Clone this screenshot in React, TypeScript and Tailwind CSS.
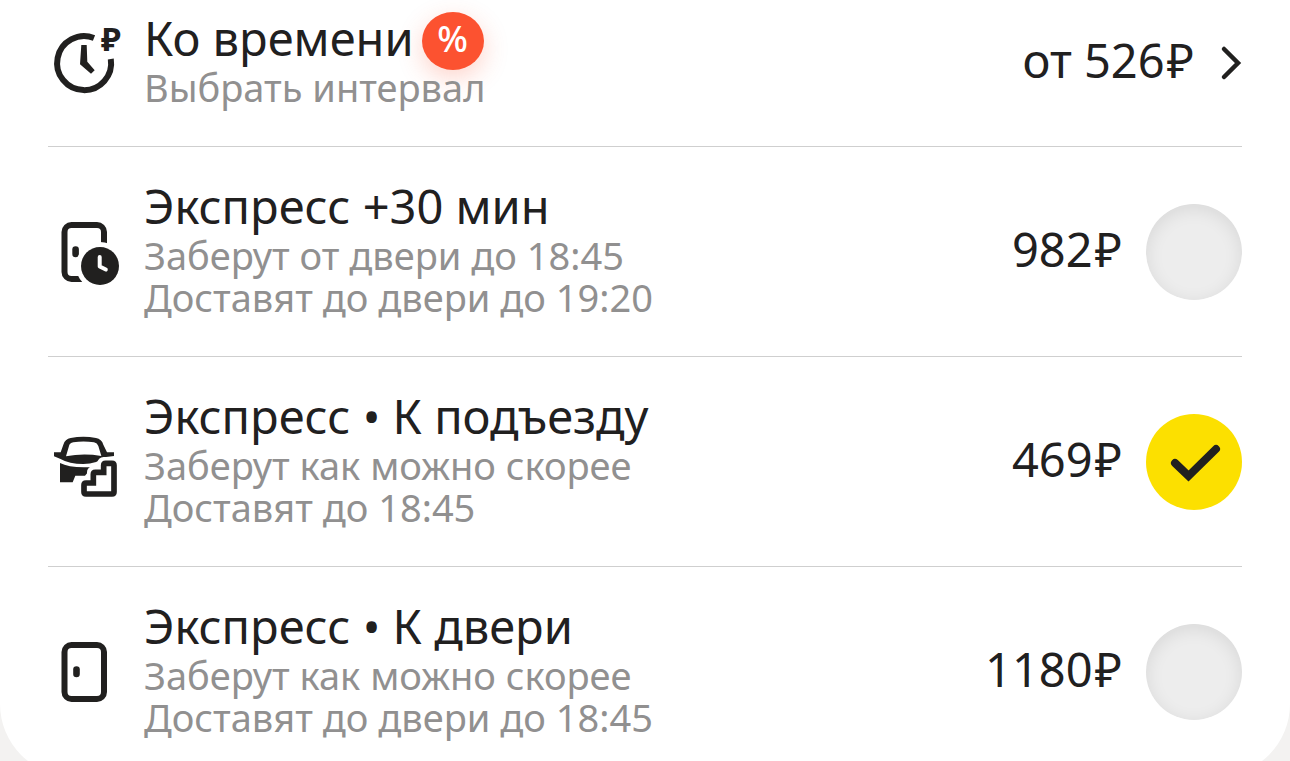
import React, { useState } from "react";

const ClockRubleIcon = () => (
  <svg viewBox="0 0 72 72" className="size-18 shrink-0 overflow-visible" aria-hidden="true">
    <path d="M46 11A27 27 0 1 0 62.8 32" fill="none" stroke="currentColor" strokeWidth="6" />
    <path d="M33.3 18H38.7L39.3 34.7L46.7 43.3L43 46.7L32 37.3Z" fill="currentColor" />
    <text x="53" y="24" fontSize="33" fontWeight="700" fill="currentColor">
      ₽
    </text>
  </svg>
);

const DoorIcon = () => (
  <svg viewBox="0 0 72 72" className="size-18 shrink-0" aria-hidden="true">
    <rect x="16.5" y="9" width="39.5" height="54" rx="7" fill="none" stroke="currentColor" strokeWidth="6" />
    <rect x="25.2" y="30.3" width="6.6" height="11" rx="3.3" fill="currentColor" />
  </svg>
);

const DoorClockIcon = () => (
  <svg viewBox="0 0 72 72" className="size-18 shrink-0" aria-hidden="true">
    <rect x="16.5" y="9" width="39.5" height="54" rx="7" fill="none" stroke="currentColor" strokeWidth="6" />
    <rect x="24.3" y="30.3" width="6.6" height="11" rx="3.3" fill="currentColor" />
    <circle cx="52" cy="50" r="24" fill="#fff" />
    <circle cx="52" cy="50" r="19" fill="currentColor" />
    <path
      d="M51.7 41V50.5L57.8 53.5"
      fill="none"
      stroke="#fff"
      strokeWidth="4"
      strokeLinecap="round"
      strokeLinejoin="round"
    />
  </svg>
);

const CarStairsIcon = () => (
  <svg viewBox="24 18 216 216" className="size-18 shrink-0" aria-hidden="true">
    <path
      fillRule="evenodd"
      d="M42 97H62L70 74Q75 57 92 54Q130 46 168 54Q185 57 190 74L201 97H222V108L192 112Q172 132 130 132Q88 132 60 116L42 109ZM78 109Q130 99 184 108L175 78Q172 69 162 67Q130 62 100 67Q89 69 87 78Z"
      fill="currentColor"
    />
    <path d="M60 129Q90 145 157 141L135 167H106L98 187H60Z" fill="currentColor" />
    <path
      d="M132 222H222V130H191V157H160V189H132Z"
      fill="#fff"
      stroke="#fff"
      strokeWidth="38"
      strokeLinejoin="round"
    />
    <path
      d="M138 222H216Q222 222 222 216V136Q222 130 216 130H197Q191 130 191 136V157H166Q160 157 160 163V189H138Q132 189 132 195V216Q132 222 138 222Z"
      fill="#fff"
      stroke="currentColor"
      strokeWidth="17"
    />
  </svg>
);

const options = [
  {
    id: "plus30",
    Icon: DoorClockIcon,
    title: "Экспресс +30 мин",
    lines: ["Заберут от двери до 18:45", "Доставят до двери до 19:20"],
    price: "982",
  },
  {
    id: "entrance",
    Icon: CarStairsIcon,
    title: "Экспресс • К подъезду",
    lines: ["Заберут как можно скорее", "Доставят до 18:45"],
    price: "469",
  },
  {
    id: "door",
    Icon: DoorIcon,
    title: "Экспресс • К двери",
    lines: ["Заберут как можно скорее", "Доставят до двери до 18:45"],
    price: "1180",
  },
];

const Price = ({ children }: any) => (
  <span className="flex gap-0.5 pb-1.5 text-[47px] leading-[60px]">
    <span>{children}</span>
    <span>₽</span>
  </span>
);

const Option = ({ option, checked, onSelect }: any) => {
  const { id, Icon, title, lines, price } = option;

  return (
    <label
      htmlFor={id}
      className="flex items-center gap-6 border-b border-[#cfcfcf] last:border-b-0 cursor-pointer"
    >
      <Icon />
      <span className="flex-1 pt-[31px] pb-[38px]">
        <span className="block text-[47px] leading-[56px]">{title}</span>
        {lines.map((line: string) => (
          <span key={line} className="block text-[38px] leading-[42px] text-[#919090]">
            {line}
          </span>
        ))}
      </span>
      <Price>{price}</Price>
      <span className="relative size-24 shrink-0">
        <input
          id={id}
          type="radio"
          name="tariff"
          checked={checked}
          onChange={() => onSelect(id)}
          className="block size-24 appearance-none rounded-full bg-[#ededed] shadow-[inset_0_4px_18px_rgba(0,0,0,0.09)] checked:bg-[#fce000] checked:shadow-none"
        />
        {checked && (
          <svg viewBox="0 0 96 96" className="absolute inset-0 pointer-events-none" aria-hidden="true">
            <path d="M29 49L42.5 62L70 35" fill="none" stroke="currentColor" strokeWidth="8" strokeLinecap="round" />
          </svg>
        )}
      </span>
    </label>
  );
};

const App = () => {
  const [selected, setSelected] = useState("entrance");

  return (
    <div className="h-screen overflow-hidden bg-[#f3f2f1] font-['Noto_Sans',sans-serif] text-[#21201f]">
      <main className="-mt-[21px] rounded-b-[72px] bg-white px-12">
        <button
          type="button"
          className="flex w-full items-center gap-6 border-b border-[#cfcfcf] text-left cursor-pointer"
        >
          <ClockRubleIcon />
          <span className="flex-1 pt-[31px] pb-[38px]">
            <span className="relative block w-fit text-[47px] leading-[56px]">
              Ко времени
              <span className="absolute left-full top-0.5 ml-2 flex h-[58px] w-[62px] items-center justify-center rounded-[50%] bg-[#fc5230] pb-1 text-[36px] font-medium text-white shadow-[0_8px_24px_rgba(252,82,48,0.25)]">
                %
              </span>
            </span>
            <span className="relative block text-[38px] leading-[42px] text-[#919090]">Выбрать интервал</span>
          </span>
          <Price>от 526</Price>
          <svg viewBox="0 0 24 36" className="h-9 w-6 shrink-0" aria-hidden="true">
            <path d="M6 4L20 18L6 32" fill="none" stroke="currentColor" strokeWidth="4.5" strokeLinecap="round" />
          </svg>
        </button>
        {options.map((option) => (
          <Option
            key={option.id}
            option={option}
            checked={selected === option.id}
            onSelect={setSelected}
          />
        ))}
      </main>
    </div>
  );
};

export default App;
